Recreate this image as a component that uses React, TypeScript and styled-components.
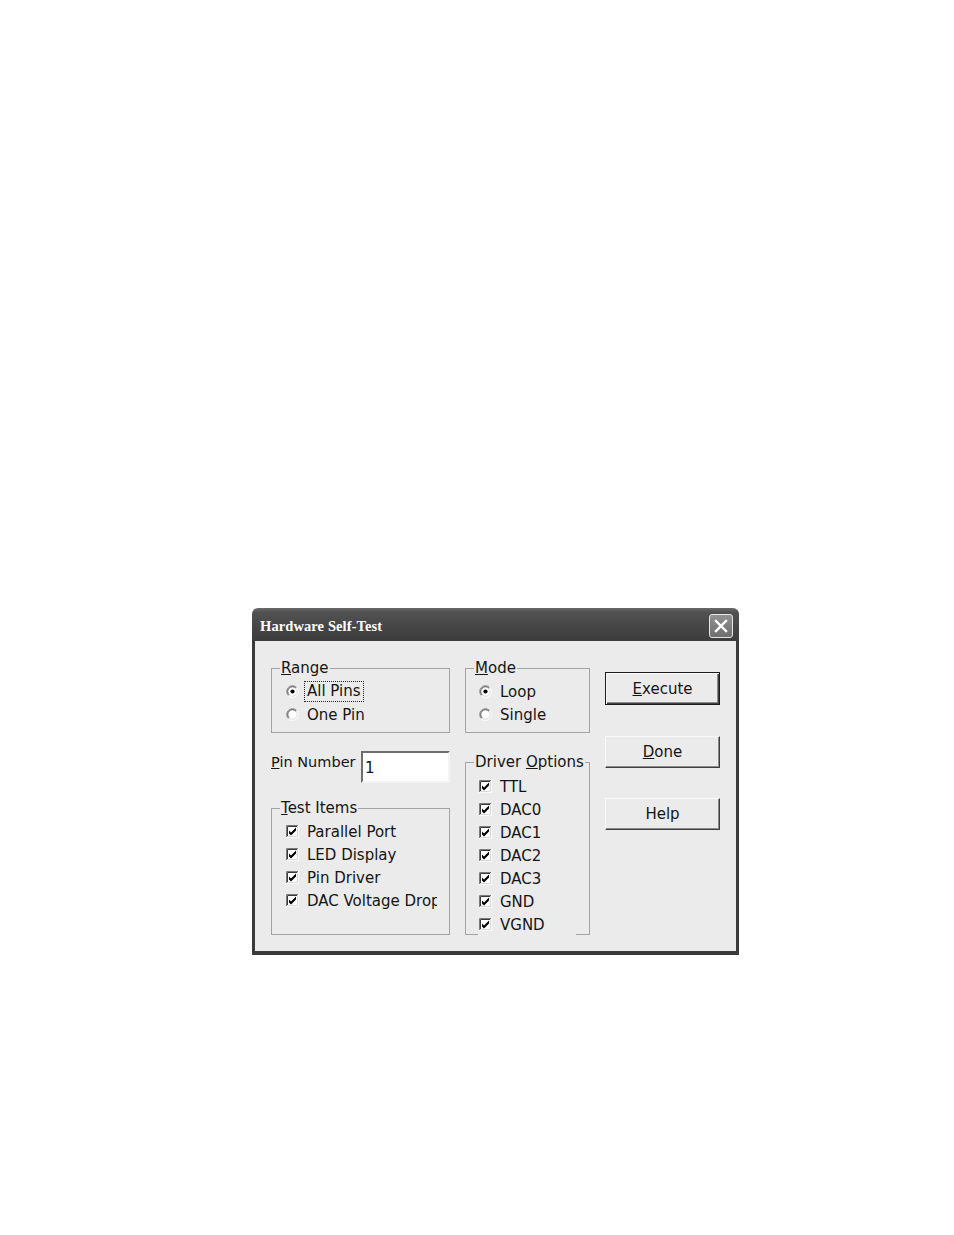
import React from 'react';
import styled, { createGlobalStyle } from 'styled-components';

const GlobalStyle = createGlobalStyle`
  html, body {
    margin: 0;
    padding: 0;
    background: #ffffff;
  }
  body {
    font-family: "DejaVu Sans", Verdana, sans-serif;
    color: #151515;
  }
`;

const Page = styled.div`
  width: 954px;
  height: 1235px;
  box-sizing: border-box;
  padding: 608px 0 0 252px;
`;

const Window = styled.div`
  width: 487px;
  display: flex;
  flex-direction: column;
`;

const TitleBar = styled.div`
  height: 33px;
  box-sizing: border-box;
  padding: 3px 6px 0 8px;
  display: flex;
  align-items: center;
  justify-content: space-between;
  border-radius: 6px 6px 0 0;
  background: linear-gradient(#6a6a6a 0%, #525252 12%, #454545 60%, #3c3c3c 100%);
`;

const Title = styled.span`
  font-family: "Liberation Serif", "Times New Roman", serif;
  font-weight: bold;
  font-size: 14.5px;
  color: #fff;
  letter-spacing: 0.1px;
`;

const CloseButton = styled.button`
  width: 24px;
  height: 24px;
  padding: 0;
  box-sizing: border-box;
  border: 1px solid #e6e6e6;
  border-radius: 3px;
  background: linear-gradient(#929292, #6e6e6e);
  display: flex;
  align-items: center;
  justify-content: center;
`;

const Frame = styled.div`
  border: solid #3a3a3a;
  border-width: 0 3px 4px 3px;
`;

const Body = styled.div`
  height: 310px;
  box-sizing: border-box;
  padding: 18px 0 16px 16px;
  background: #ebebeb;
  display: flex;
`;

const Column = styled.div<{ $width: number; $gap?: number; $top?: number }>`
  width: ${p => p.$width}px;
  margin-left: ${p => p.$gap ?? 0}px;
  padding-top: ${p => p.$top ?? 0}px;
  display: flex;
  flex-direction: column;
`;

const Group = styled.fieldset<{ $height?: number; $mt?: number }>`
  margin: ${p => p.$mt ?? 0}px 0 0 0;
  padding: 0;
  min-width: 0;
  border: 1px solid #a3a3a3;
  ${p =>
    p.$height
      ? `height: ${p.$height}px; box-sizing: border-box; flex: none;`
      : 'flex: 1 1 0; min-height: 0;'}
`;

const Legend = styled.legend`
  margin-left: 8px;
  padding: 0 1px;
  font-size: 15px;
  line-height: 18px;
`;

const List = styled.div<{ $indent: number; $top?: number }>`
  padding: ${p => p.$top ?? 3}px 0 0 ${p => p.$indent}px;
  display: flex;
  flex-direction: column;
`;

const Row = styled.div<{ $width?: number; $cover?: boolean }>`
  height: 23px;
  flex: none;
  display: flex;
  align-items: center;
  font-size: 15px;
  white-space: nowrap;
  overflow: hidden;
  ${p => (p.$width ? `width: ${p.$width}px;` : '')}
  ${p => (p.$cover ? 'background: #ebebeb; padding-left: 1px;' : '')}
`;

const Mark = styled.span`
  width: 13px;
  height: 13px;
  flex: none;
  margin-right: 8px;
  display: flex;
`;

const Focus = styled.span`
  padding: 0 1px;
  margin-left: -2px;
  line-height: 17px;
  outline: 1px dotted #222;
  outline-offset: 0;
  border: 1px solid transparent;
`;

const PinRow = styled.div`
  margin-top: 18px;
  display: flex;
  align-items: flex-start;
  flex: none;
`;

const PinLabel = styled.label`
  width: 90px;
  margin-top: 2px;
  font-size: 14.5px;
  line-height: 18px;
  white-space: nowrap;
`;

const TextBox = styled.input`
  width: 89px;
  height: 32px;
  box-sizing: border-box;
  margin: 0;
  padding: 2px 2px 0;
  border: 2px solid;
  border-color: #6e6e6e #f4f4f4 #f4f4f4 #6e6e6e;
  background: #fff;
  font-family: "DejaVu Sans", Verdana, sans-serif;
  font-size: 15px;
  color: #151515;
  outline: none;
`;

const Button = styled.button<{ $default?: boolean; $mt?: number }>`
  width: 115px;
  height: ${p => (p.$default ? 33 : 32)}px;
  margin-top: ${p => p.$mt ?? 0}px;
  flex: none;
  box-sizing: border-box;
  padding: 0;
  background: #ebebeb;
  font-family: "DejaVu Sans", Verdana, sans-serif;
  font-size: 15px;
  color: #151515;
  border: 1px solid;
  border-color: ${p => (p.$default ? '#1c1c1c' : '#fbfbfb #3e3e3e #3e3e3e #fbfbfb')};
  box-shadow: ${p =>
    p.$default
      ? 'inset 1px 1px 0 #fbfbfb, inset -1px -1px 0 #3e3e3e, inset -2px -2px 0 #8c8c8c'
      : 'inset -1px -1px 0 #8c8c8c'};
`;

function Check() {
  return (
    <Mark>
      <svg width="13" height="13" viewBox="0 0 13 13">
        <rect x="0" y="0" width="13" height="13" fill="#fff" />
        <path d="M0.5 13V0.5H13" stroke="#7a7a7a" fill="none" />
        <path d="M1.5 12V1.5H12" stroke="#3a3a3a" fill="none" />
        <path d="M0 12.5H12.5V0" stroke="#fafafa" fill="none" />
        <path d="M1 11.5H11.5V1" stroke="#d8d8d8" fill="none" />
        <path d="M3 5.5L5 7.5L10 2.5V5.5L5 10.5L3 8.5Z" fill="#000" />
      </svg>
    </Mark>
  );
}

function Radio({ on }: { on?: boolean }) {
  const id = on ? 'on' : 'off';
  return (
    <Mark>
      <svg width="13" height="13" viewBox="0 0 13 13">
        <defs>
          <linearGradient id={`o-${id}`} x1="0" y1="0" x2="1" y2="1">
            <stop offset="0.45" stopColor="#8a8a8a" />
            <stop offset="0.55" stopColor="#ffffff" />
          </linearGradient>
          <linearGradient id={`i-${id}`} x1="0" y1="0" x2="1" y2="1">
            <stop offset="0.45" stopColor="#444" />
            <stop offset="0.55" stopColor="#d8d8d8" />
          </linearGradient>
        </defs>
        <circle cx="6.5" cy="6.5" r="5.8" fill="#fff" stroke={`url(#o-${id})`} strokeWidth="1" />
        <circle cx="6.5" cy="6.5" r="4.8" fill="#fff" stroke={`url(#i-${id})`} strokeWidth="1" />
        {on && <circle cx="6.5" cy="6.5" r="2.1" fill="#000" />}
      </svg>
    </Mark>
  );
}

const testItems = ['Parallel Port', 'LED Display', 'Pin Driver', 'DAC Voltage Drop'];
const driverOptions = ['TTL', 'DAC0', 'DAC1', 'DAC2', 'DAC3', 'GND', 'VGND'];

export default function App() {
  return (
    <>
      <GlobalStyle />
      <Page>
        <Window>
          <TitleBar>
            <Title>Hardware Self-Test</Title>
            <CloseButton aria-label="Close">
              <svg width="14" height="14" viewBox="0 0 14 14">
                <path d="M2 2L12 12M12 2L2 12" stroke="#fff" strokeWidth="2.4" strokeLinecap="square" />
              </svg>
            </CloseButton>
          </TitleBar>
          <Frame>
            <Body>
              <Column $width={179}>
                <Group $height={74}>
                  <Legend><u>R</u>ange</Legend>
                  <List $indent={14}>
                    <Row><Radio on /><Focus>All Pins</Focus></Row>
                    <Row><Radio />One Pin</Row>
                  </List>
                </Group>
                <PinRow>
                  <PinLabel><u>P</u>in Number</PinLabel>
                  <TextBox defaultValue="1" />
                </PinRow>
                <Group $mt={16}>
                  <Legend><u>T</u>est Items</Legend>
                  <List $indent={14}>
                    {testItems.map(item => (
                      <Row key={item} $width={151}><Check />{item}</Row>
                    ))}
                  </List>
                </Group>
              </Column>
              <Column $width={125} $gap={15}>
                <Group $height={74}>
                  <Legend><u>M</u>ode</Legend>
                  <List $indent={13}>
                    <Row><Radio on />Loop</Row>
                    <Row><Radio />Single</Row>
                  </List>
                </Group>
                <Group $mt={20}>
                  <Legend>Driver <u>O</u>ptions</Legend>
                  <List $indent={12} $top={4}>
                    {driverOptions.map(opt => (
                      <Row key={opt} $width={97} $cover><Check />{opt}</Row>
                    ))}
                  </List>
                </Group>
              </Column>
              <Column $width={115} $gap={15} $top={13}>
                <Button $default><u>E</u>xecute</Button>
                <Button $mt={31}><u>D</u>one</Button>
                <Button $mt={30}>Help</Button>
              </Column>
            </Body>
          </Frame>
        </Window>
      </Page>
    </>
  );
}
